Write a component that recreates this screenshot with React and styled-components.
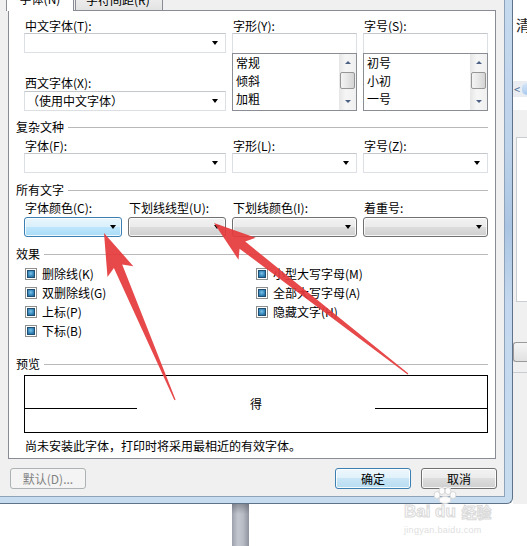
import React from 'react';
import styled, { createGlobalStyle, css } from 'styled-components';

const Global = createGlobalStyle`
  html, body { margin: 0; padding: 0; background: #fff; }
  body { font-family: "Noto Sans CJK SC", "Liberation Sans", sans-serif; font-size: 12px; color: #000; }
`;

const Root = styled.div`
  position: relative;
  width: 527px;
  height: 546px;
  overflow: hidden;
  background: #fff;
  font-family: "Noto Sans CJK SC", "Liberation Sans", sans-serif;
  font-size: 12px;
`;

const Top = styled.div`
  display: flex;
  height: 504px;
`;

const Frame = styled.div`
  width: 513px;
  height: 504px;
  box-sizing: border-box;
  flex: none;
  background: linear-gradient(to bottom, #c6daee, #bcd2ea 30%, #a9c4e2 45%, #c3d8ee 60%, #c8dcef);
  padding: 0 7px 6px 0;
  border-right: 1px solid #5f7288;
  border-bottom: 1px solid #5f7288;
  border-bottom-right-radius: 6px;
`;

const Body = styled.div`
  width: 505px;
  height: 497px;
  box-sizing: border-box;
  background: #f0f0f0;
  border-right: 1px solid #8ea3ba;
  border-bottom: 1px solid #8ea3ba;
  display: flex;
  flex-direction: column;
`;

const TabStrip = styled.div`
  height: 10px;
  display: flex;
  align-items: flex-end;
  padding-left: 6px;
`;

const Tab = styled.div`
  flex: none;
  box-sizing: border-box;
  border: 1px solid #898c95;
  border-bottom: none;
  line-height: 14px;
  white-space: nowrap;
  ${p => p.$active ? css`
    width: 68px;
    height: 23px;
    margin-bottom: -1px;
    background: #fff;
    position: relative;
    z-index: 1;
    text-align: center;
    padding-top: 3px;
  ` : css`
    width: 88px;
    height: 20px;
    margin-left: 1px;
    background: linear-gradient(#f4f4f4, #e3e3e3);
    padding: 2px 0 0 10px;
  `}
`;

const Panel = styled.div`
  margin-left: 8px;
  width: 488px;
  height: 449px;
  box-sizing: border-box;
  border: 1px solid #898c95;
  background: #fff;
  padding: 8px 7px 0 7px;
  display: flex;
  flex-direction: column;
`;

const Grid = styled.div`
  margin-left: 8px;
  margin-top: ${p => p.$mt || 0}px;
  display: grid;
  grid-template-columns: ${p => p.$cols};
  column-gap: 6px;
  align-items: start;
`;

const Col = styled.div`
  display: flex;
  flex-direction: column;
`;

const Label = styled.div`
  height: 14px;
  line-height: 14px;
  padding-left: 1px;
  white-space: nowrap;
  margin-top: ${p => p.$mt || 0}px;
`;

const Arrow = styled.span`
  width: 0;
  height: 0;
  border-left: 3.5px solid transparent;
  border-right: 3.5px solid transparent;
  border-top: 4px solid #000;
  margin-left: auto;
  flex: none;
`;

const Combo = styled.div`
  height: 20px;
  box-sizing: border-box;
  margin-top: ${p => p.$mt || 0}px;
  border: 1px solid #dcdfe3;
  border-top-color: #c4c7cc;
  background: #fff;
  display: flex;
  align-items: center;
  padding: 0 7px 0 2px;
  line-height: 14px;
  white-space: nowrap;
`;

const Input = styled.div`
  height: 20px;
  box-sizing: border-box;
  border: 1px solid #dcdfe3;
  border-top-color: #c4c7cc;
  border-bottom: none;
  background: #fff;
`;

const List = styled.div`
  height: 58px;
  box-sizing: border-box;
  border: 1px solid #8a8d94;
  background: #fff;
  display: flex;
`;

const Items = styled.div`
  flex: 1;
  padding-left: 3px;
  line-height: 18px;
`;

const Scroll = styled.div`
  width: 17px;
  flex: none;
  display: flex;
  flex-direction: column;
  background: linear-gradient(to right, #e6e6e6, #f6f6f6 40%, #f0f0f0);
`;

const ScrollBtn = styled.div`
  height: 17px;
  display: flex;
  align-items: center;
  justify-content: center;
`;

const Tri = styled.span`
  width: 0;
  height: 0;
  border-left: 3px solid transparent;
  border-right: 3px solid transparent;
  ${p => p.$up ? css`border-bottom: 3px solid #4d6185;` : css`border-top: 3px solid #4d6185;`}
`;

const Track = styled.div`
  flex: 1;
  padding: 1px 1px 0;
`;

const Thumb = styled.div`
  height: 17px;
  box-sizing: border-box;
  border: 1px solid #969696;
  border-radius: 2px;
  background: linear-gradient(to right, #f4f4f4, #e6e6e6 50%, #d4d4d4);
`;

const Section = styled.div`
  height: 14px;
  line-height: 14px;
  display: flex;
  align-items: center;
  margin-top: ${p => p.$mt || 0}px;
  &::after {
    content: "";
    flex: 1;
    height: 1px;
    margin-left: 4px;
    background: #b9b9b9;
  }
`;

const DropButton = styled.div`
  height: 20px;
  box-sizing: border-box;
  margin-top: 2px;
  border: 1px solid #707070;
  border-radius: 3px;
  display: flex;
  align-items: center;
  padding-right: 5px;
  box-shadow: inset 0 0 0 1px rgba(255,255,255,0.8);
  background: ${p => p.$hot
    ? 'linear-gradient(#eaf6fd, #d9f0fc 50%, #bee6fd 50%, #a9dbf6)'
    : 'linear-gradient(#f2f2f2, #ebebeb 50%, #dddddd 50%, #cfcfcf)'};
  border-color: ${p => p.$hot ? '#3c7fb1' : '#707070'};
`;

const Checks = styled.div`
  margin: 3px 0 0 9px;
  display: grid;
  grid-template-columns: 231px 1fr;
`;

const CheckItem = styled.div`
  height: 19px;
  display: flex;
  align-items: center;
  white-space: nowrap;
`;

const Box = styled.span`
  width: 12px;
  height: 12px;
  box-sizing: border-box;
  border: 1px solid #8e8f8f;
  background: #fff;
  padding: 1px;
  margin-right: 5px;
  flex: none;
  &::before {
    content: "";
    display: block;
    width: 8px;
    height: 8px;
    box-sizing: border-box;
    border: 1px solid #1f4f72;
    background: radial-gradient(circle at 45% 40%, #7cc3e8, #3485b9 60%, #24628f);
  }
`;

const Preview = styled.div`
  margin: 4px 0 0 8px;
  width: 464px;
  height: 58px;
  box-sizing: border-box;
  border: 1px solid #000;
  display: flex;
  align-items: flex-start;
`;

const PreviewLine = styled.div`
  width: 112px;
  height: 1px;
  margin-top: 32px;
  background: #000;
  flex: none;
`;

const PreviewText = styled.div`
  flex: 1;
  text-align: center;
  margin-top: 21px;
  line-height: 14px;
`;

const Note = styled.div`
  margin: 6px 0 0 9px;
  line-height: 14px;
  white-space: nowrap;
`;

const ButtonRow = styled.div`
  margin-top: 9px;
  height: 21px;
  display: flex;
  padding: 0 7px 0 10px;
  gap: 10px;
`;

const Btn = styled.div`
  width: 76px;
  height: 21px;
  box-sizing: border-box;
  border: 1px solid #707070;
  border-radius: 3px;
  display: flex;
  align-items: center;
  justify-content: center;
  line-height: 14px;
  box-shadow: inset 0 0 0 1px rgba(255,255,255,0.85);
  background: linear-gradient(#f2f2f2, #ebebeb 50%, #dddddd 50%, #cfcfcf);
  ${p => p.$default && css`
    border-color: #3c7fb1;
    background: linear-gradient(#eef7fc, #dff1fb 50%, #c9e6f6 50%, #b7dcf1);
  `}
  ${p => p.$disabled && css`
    border-color: #adb2b5;
    background: #f4f4f4;
    color: #838383;
    box-shadow: none;
  `}
`;

const Spacer = styled.div`
  flex: 1;
`;

const Side = styled.div`
  flex: 1;
  display: flex;
  flex-direction: column;
  background: #f0f0f0;
`;

const SideTop = styled.div`
  height: 81px;
  background: #fff;
  padding: 17px 0 0 3px;
  box-sizing: border-box;
  font-size: 15px;
  line-height: 16px;
  color: #222;
`;

const SideBar = styled.div`
  height: 16px;
  background: #e9edf2;
  display: flex;
  align-items: center;
  padding-left: 1px;
  gap: 2px;
  color: #4a6a92;
  font-size: 11px;
  line-height: 12px;
`;

const Pill = styled.span`
  width: 10px;
  height: 12px;
  border-radius: 5px 0 0 5px;
  background: linear-gradient(#d7e7f8, #a9c9ee);
`;

const SideGap = styled.div`
  height: 13px;
  background: #fff;
`;

const SidePanel = styled.div`
  margin: 27px 0 0 3px;
  height: 163px;
  border: 1px solid #c9ccd1;
  border-right: none;
  background: #fff;
`;

const SideButton = styled.div`
  margin: 40px 0 0 0;
  height: 18px;
  border: 1px solid #9a9a9a;
  border-right: none;
  border-radius: 3px 0 0 3px;
  background: linear-gradient(#f5f5f5, #e1e1e1);
`;

const SideRule = styled.div`
  margin-top: 10px;
  height: 1px;
  background: #c9ccd1;
`;

const Bottom = styled.div`
  height: 42px;
  padding-left: 232px;
`;

const Pole = styled.div`
  width: 17px;
  height: 100%;
  background:
    linear-gradient(rgba(80,85,95,0.45), rgba(80,85,95,0) 10px),
    linear-gradient(to right, #9ca1ac, #c3c7cf 35%, #b8bcc5 65%, #8e939d);
`;

const Overlay = styled.svg`
  position: absolute;
  left: 0;
  top: 0;
  pointer-events: none;
`;

const Watermark = styled.div`
  position: absolute;
  left: 404px;
  top: 488px;
  width: 100px;
  pointer-events: none;
  display: flex;
  flex-direction: column;
`;

const WmRow = styled.div`
  display: flex;
  align-items: flex-end;
  height: 31px;
  font-family: "Liberation Sans", sans-serif;
  font-weight: bold;
  font-size: 17px;
  line-height: 15px;
  color: #fcfcfc;
  -webkit-text-stroke: 1px #dadada;
`;

const WmDu = styled.span`
  display: flex;
  flex-direction: column;
  align-items: center;
  margin-left: 1px;
`;

const WmCn = styled.span`
  font-family: "Noto Sans CJK SC", sans-serif;
  font-size: 15px;
  margin-left: 2px;
`;

const WmUrl = styled.div`
  margin-top: 6px;
  font-family: "Liberation Sans", sans-serif;
  font-size: 9px;
  line-height: 10px;
  color: #e0e0e0;
  letter-spacing: 0.3px;
`;

function ListBox({ items }) {
  return (
    <List>
      <Items>{items.map(t => <div key={t}>{t}</div>)}</Items>
      <Scroll>
        <ScrollBtn><Tri $up /></ScrollBtn>
        <Track><Thumb /></Track>
        <ScrollBtn><Tri /></ScrollBtn>
      </Scroll>
    </List>
  );
}

function Check({ children }) {
  return <CheckItem><Box />{children}</CheckItem>;
}

function arrowPoints(tip, tail, headLen, headHalf, shaftHalf, tailHalf, notch) {
  const dx = tail[0] - tip[0];
  const dy = tail[1] - tip[1];
  const len = Math.hypot(dx, dy);
  const u = [dx / len, dy / len];
  const n = [u[1], -u[0]];
  const at = (d, w) => [tip[0] + u[0] * d + n[0] * w, tip[1] + u[1] * d + n[1] * w];
  const pts = [
    tip,
    at(headLen, headHalf),
    at(notch, shaftHalf),
    [tail[0] + n[0] * tailHalf, tail[1] + n[1] * tailHalf],
    [tail[0] - n[0] * tailHalf, tail[1] - n[1] * tailHalf],
    at(notch, -shaftHalf),
    at(headLen, -headHalf),
  ];
  return pts.map(p => p.map(v => v.toFixed(1)).join(',')).join(' ');
}

export default function App() {
  return (
    <Root>
      <Global />
      <Top>
        <Frame>
          <Body>
            <TabStrip>
              <Tab $active>字体(N)</Tab>
              <Tab>字符间距(R)</Tab>
            </TabStrip>
            <Panel>
              <Grid $cols="202px 125px 125px">
                <Col>
                  <Label>中文字体(T):</Label>
                  <Combo><Arrow /></Combo>
                  <Label $mt={23}>西文字体(X):</Label>
                  <Combo $mt={1}>（使用中文字体）<Arrow /></Combo>
                </Col>
                <Col>
                  <Label>字形(Y):</Label>
                  <Input />
                  <ListBox items={['常规', '倾斜', '加粗']} />
                </Col>
                <Col>
                  <Label>字号(S):</Label>
                  <Input />
                  <ListBox items={['初号', '小初', '一号']} />
                </Col>
              </Grid>

              <Section $mt={9}>复杂文种</Section>
              <Grid $mt={5} $cols="202px 125px 125px">
                <Col>
                  <Label>字体(F):</Label>
                  <Combo><Arrow /></Combo>
                </Col>
                <Col>
                  <Label>字形(L):</Label>
                  <Combo><Arrow /></Combo>
                </Col>
                <Col>
                  <Label>字号(Z):</Label>
                  <Combo><Arrow /></Combo>
                </Col>
              </Grid>

              <Section $mt={10}>所有文字</Section>
              <Grid $mt={4} $cols="98px 98px 125px 125px">
                <Col>
                  <Label>字体颜色(C):</Label>
                  <DropButton $hot><Arrow /></DropButton>
                </Col>
                <Col>
                  <Label>下划线线型(U):</Label>
                  <DropButton><Arrow /></DropButton>
                </Col>
                <Col>
                  <Label>下划线颜色(I):</Label>
                  <DropButton><Arrow /></DropButton>
                </Col>
                <Col>
                  <Label>着重号:</Label>
                  <DropButton><Arrow /></DropButton>
                </Col>
              </Grid>

              <Section $mt={10}>效果</Section>
              <Checks>
                <Col>
                  <Check>删除线(K)</Check>
                  <Check>双删除线(G)</Check>
                  <Check>上标(P)</Check>
                  <Check>下标(B)</Check>
                </Col>
                <Col>
                  <Check>小型大写字母(M)</Check>
                  <Check>全部大写字母(A)</Check>
                  <Check>隐藏文字(H)</Check>
                </Col>
              </Checks>

              <Section $mt={17}>预览</Section>
              <Preview>
                <PreviewLine />
                <PreviewText>得</PreviewText>
                <PreviewLine />
              </Preview>
              <Note>尚未安装此字体，打印时将采用最相近的有效字体。</Note>
            </Panel>
            <ButtonRow>
              <Btn $disabled>默认(D)...</Btn>
              <Spacer />
              <Btn $default>确定</Btn>
              <Btn>取消</Btn>
            </ButtonRow>
          </Body>
        </Frame>
        <Side>
          <SideTop>清</SideTop>
          <SideBar>&lt;<Pill /></SideBar>
          <SideGap />
          <SidePanel />
          <SideButton />
          <SideRule />
        </Side>
      </Top>
      <Bottom>
        <Pole />
      </Bottom>

      <Watermark>
        <WmRow>
          Bai
          <WmDu>
            <svg width="28" height="17" viewBox="0 0 28 17">
              <g fill="#fcfcfc" stroke="#d8d8d8" strokeWidth="1">
                <ellipse cx="6" cy="8" rx="3" ry="3.5" />
                <ellipse cx="11" cy="4" rx="3" ry="3.5" />
                <ellipse cx="17" cy="4" rx="3" ry="3.5" />
                <ellipse cx="22" cy="8" rx="3" ry="3.5" />
                <ellipse cx="14" cy="13" rx="6" ry="3.5" />
              </g>
            </svg>
            du
          </WmDu>
          <WmCn>经验</WmCn>
        </WmRow>
        <WmUrl>jingyan.baidu.com</WmUrl>
      </Watermark>

      <Overlay width="527" height="546" viewBox="0 0 527 546">
        <polygon
          points={arrowPoints([104, 233], [175, 400], 42, 14, 4.5, 0.7, 36)}
          fill="#e5393c"
          opacity="0.92"
        />
        <polygon
          points={arrowPoints([214, 223], [408, 374], 42, 14, 4.5, 0.7, 36)}
          fill="#e5393c"
          opacity="0.92"
        />
      </Overlay>
    </Root>
  );
}
